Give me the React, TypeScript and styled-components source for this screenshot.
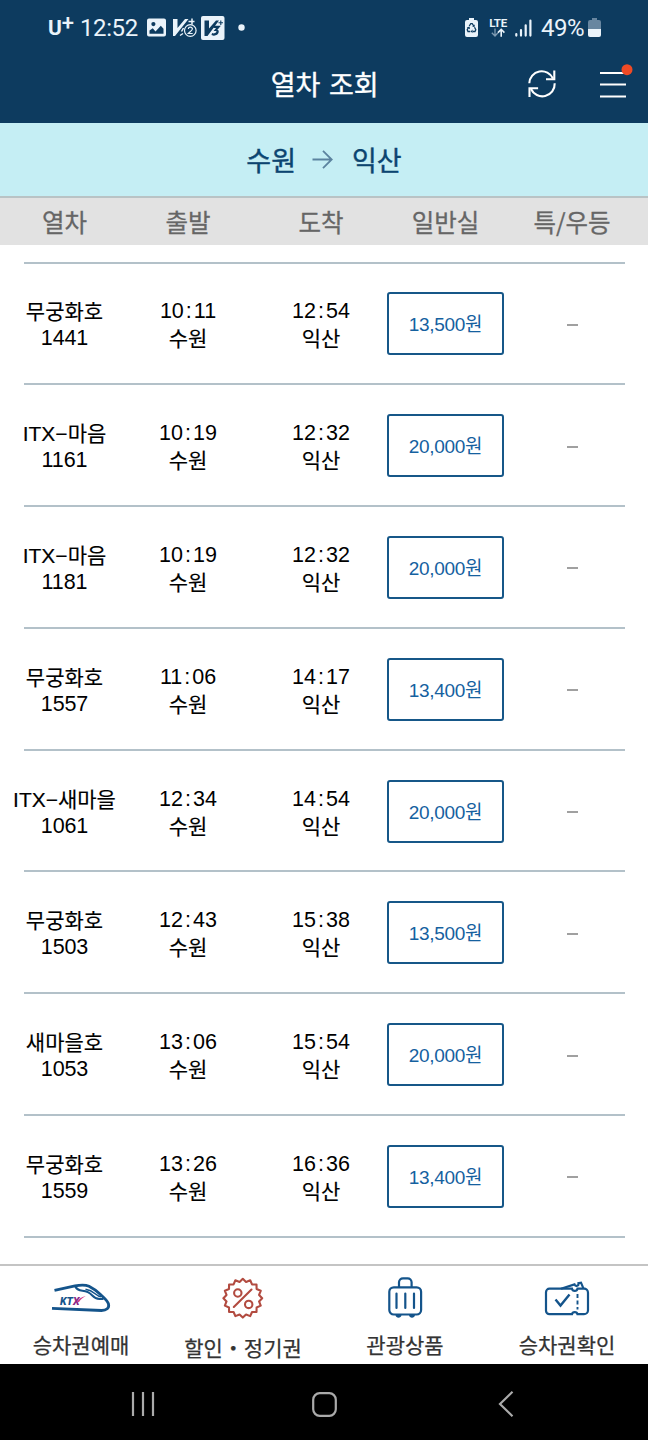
import React from "react";
import styled, { createGlobalStyle } from "styled-components";

const GlobalStyle = createGlobalStyle`
  * { box-sizing: border-box; }
  body { margin: 0; background: #fff; }
`;

const KR = `"Noto Sans CJK KR", sans-serif`;
const NUM = `"Liberation Sans", "Noto Sans CJK KR", sans-serif`;

const Screen = styled.div`
  width: 648px;
  height: 1440px;
  display: flex;
  flex-direction: column;
  background: #fff;
  font-family: ${KR};
  overflow: hidden;
`;

const StatusBar = styled.div`
  height: 56px;
  flex: none;
  display: flex;
  justify-content: space-between;
  padding: 0 47px 0 48px;
  background: #0d3b5f;
  color: #eaf3fa;
`;

const StatusGroup = styled.div`
  display: flex;
  align-items: center;
  height: 55px;
`;

const StatusText = styled.span<{ $width: number; $spacing?: number }>`
  width: ${(p) => p.$width}px;
  font: 400 24px/28px Roboto, sans-serif;
  letter-spacing: ${(p) => p.$spacing ?? 0}px;
  white-space: nowrap;
`;

const Carrier = styled.span`
  display: flex;
  width: 32px;
  font: 700 21px/30px Roboto, sans-serif;
`;

const CarrierPlus = styled.span`
  font-size: 22px;
  line-height: 19px;
  font-weight: 500;
`;

const NetworkBox = styled.div`
  width: 20px;
  display: flex;
  flex-direction: column;
  align-items: center;
`;

const NetworkLabel = styled.span`
  font: 700 11.5px/10px Roboto, sans-serif;
  letter-spacing: -0.3px;
`;

const Glyph = styled.svg<{ $ml?: number; $mr?: number; $mb?: number }>`
  display: block;
  flex: none;
  margin: 0 ${(p) => p.$mr ?? 0}px ${(p) => p.$mb ?? 0}px ${(p) => p.$ml ?? 0}px;
`;

const AppBar = styled.header`
  height: 67px;
  flex: none;
  display: grid;
  grid-template-columns: 128px 1fr 128px;
  align-items: center;
  padding-bottom: 11px;
  background: #0d3b5f;
`;

const Title = styled.h1`
  grid-column: 2;
  margin: 0;
  padding-left: 1.5px;
  text-align: center;
  font-size: 27px;
  line-height: 40px;
  font-weight: 400;
  -webkit-text-stroke: 0.4px #fff;
  word-spacing: 2.5px;
  color: #fff;
`;

const AppActions = styled.div`
  display: flex;
  align-items: center;
  gap: 42px;
  padding-left: 7px;
`;

const RouteBar = styled.div`
  height: 73px;
  flex: none;
  display: flex;
  align-items: center;
  justify-content: center;
  background: #c5eef4;
  color: #0b4470;
  font-size: 27px;
  line-height: 40px;
  -webkit-text-stroke: 0.4px #0b4470;
`;

const TableHead = styled.div`
  height: 49px;
  flex: none;
  display: grid;
  grid-template-columns: 113px 134px 132px 117px 136px;
  align-items: center;
  padding: 0 8px;
  border-top: 2px solid #b9c3c5;
  background: #e2e2e2;
`;

const HeadCell = styled.div`
  text-align: center;
  font-size: 24.5px;
  line-height: 36px;
  color: #666;
  -webkit-text-stroke: 0.3px #666;
  white-space: nowrap;
`;

const List = styled.div`
  height: 1019px;
  flex: none;
  padding-top: 16.5px;
`;

const Rule = styled.div`
  height: 2px;
  margin: 0 23.5px;
  background: #b3c1c9;
`;

const Row = styled.div`
  height: 119.8px;
  display: grid;
  grid-template-columns: 113px 134px 132px 117px 136px;
  align-items: center;
  padding: 0 8px;
`;

const Cell = styled.div`
  display: flex;
  flex-direction: column;
  align-items: center;
  padding-top: 4px;
  color: #000;
`;

const Line = styled.span<{ $kind: "hangul" | "number" | "time" }>`
  height: 27px;
  line-height: 27px;
  white-space: nowrap;
  font-family: ${(p) => (p.$kind === "hangul" ? `"Liberation Sans", ${KR}` : NUM)};
  font-size: ${(p) => (p.$kind === "hangul" ? 21 : 21.5)}px;
  letter-spacing: ${(p) => (p.$kind === "number" ? -0.1 : 0)}px;
  -webkit-text-stroke: ${(p) => (p.$kind === "hangul" ? 0.15 : 0)}px #000;
`;

const Colon = styled.span`
  margin: 0 2px;
`;

const FareButton = styled.button`
  width: 117px;
  height: 63px;
  margin: 1px 0 0;
  padding: 2px 0 0;
  border: 2px solid #165788;
  border-radius: 3px;
  background: #fff;
  color: #15619f;
  font-family: ${NUM};
  font-size: 19px;
  line-height: 27px;
  letter-spacing: -0.3px;
`;

const NoSeat = styled.span`
  width: 11px;
  height: 2px;
  margin: 3px auto 0;
  background: #a0a0a0;
`;

const TabBar = styled.nav`
  height: 100px;
  flex: none;
  display: grid;
  grid-template-columns: repeat(4, 1fr);
  border-top: 2px solid #c4c4c4;
  background: #fff;
`;

const Tab = styled.div`
  display: flex;
  flex-direction: column;
  align-items: center;
  padding-top: 8px;
`;

const TabLabel = styled.span<{ $drop?: number }>`
  margin-top: ${(p) => 6 + (p.$drop ?? 0)}px;
  font-size: 21px;
  line-height: 32px;
  color: #333;
  -webkit-text-stroke: 0.25px #333;
  white-space: nowrap;
`;

const NavBar = styled.div`
  height: 76px;
  flex: none;
  display: flex;
  align-items: center;
  justify-content: space-between;
  padding: 4px 132px 0 130px;
  background: #000;
`;

const PictureIcon = () => (
  <Glyph width="19" height="19" viewBox="0 0 19 19">
    <path fillRule="evenodd" fill="currentColor" d="M2 .5h15a2 2 0 0 1 2 2v14a2 2 0 0 1-2 2H2a2 2 0 0 1-2-2v-14a2 2 0 0 1 2-2ZM2.5 12.5v3.2h14v-5L13.8 7.8 8.5 13.4 5.7 10.3ZM6.4 4a2.1 2.1 0 1 0 0 4.2 2.1 2.1 0 0 0 0-4.2Z" />
  </Glyph>
);

const VaccineIcon = () => (
  <Glyph $ml={6} width="25" height="22" viewBox="0 0 25 22">
    <path fill="currentColor" d="M1 2h4.500v9L13 2h3.500L3 19H1Z" />
    <path fill="none" stroke="currentColor" strokeWidth="1.5" d="M16.500 4.500h6M20 1.500v6M11.500 11l-2 3.500M11 16.500l-3 2" />
    <circle cx="18.300" cy="13.500" r="5.800" fill="#0d3b5f" stroke="currentColor" strokeWidth="1.2" />
    <path fill="none" stroke="currentColor" strokeWidth="1.2" d="M16.300 12c.2-2.500 4.200-2.300 4.100 0-.1 1.400-2.600 2.800-4.100 4.500h4.400" />
  </Glyph>
);

const VaccineBoxIcon = () => (
  <Glyph $ml={4} width="24" height="24" viewBox="0 0 24 24">
    <rect width="23.5" height="24" rx="2" fill="currentColor" />
    <path fill="#0d3b5f" d="M3.500 4.500H8v8l7-8h3L6.500 20h-3Z" />
    <path fill="none" stroke="#0d3b5f" strokeWidth="2.200" d="M12.500 10.800h5L14.800 14c3 .3 2.400 4-2 4.700l-2-.7" />
    <path fill="none" stroke="#0d3b5f" strokeWidth="1.1" d="M17.500 6.800h4.500M19.800 4.500v4.600" />
  </Glyph>
);

const RecycleBattery = () => (
  <Glyph width="13" height="19" viewBox="0 0 13 19">
    <path fill="currentColor" d="M4 0h5v2h2a2 2 0 0 1 2 2v13a2 2 0 0 1-2 2H2a2 2 0 0 1-2-2V4a2 2 0 0 1 2-2h2Z" />
    <path fill="none" stroke="#0d3b5f" strokeWidth="1.3" d="m4.2 8 1.6-2.3h1.4L8.8 8M9.5 9.3l1.3 2.5-.8 1.7H7.6M5.3 13.5H3l-.8-1.7L3.6 9.3" />
    <path fill="#0d3b5f" d="m9.8 6.4-.3 2.8-2.4-1Zm-2.3 5.2v3.5l-1.9-1.7ZM1.8 9.4l2.8-.8.4 2.7Z" />
  </Glyph>
);

const DataArrows = () => (
  <Glyph width="14" height="9" viewBox="0 0 14 9">
    <path fill="none" stroke="#7f9bb2" strokeWidth="1.3" d="M4 .5v7M.8 4.8 4 8l3-3.2" />
    <path fill="none" stroke="currentColor" strokeWidth="1.6" d="M10.2 8.8v-7M7 4.6l3.2-3.3 3.2 3.3" />
  </Glyph>
);

const SignalIcon = () => (
  <Glyph $ml={7} width="17" height="18" viewBox="0 0 17 18">
    <path stroke="currentColor" strokeWidth="2.2" strokeLinecap="round" d="M1.3 15v1.6M6 11v5.6M10.7 6.3v10.3M15.4 1.5v15.1" />
  </Glyph>
);

const HalfBattery = () => (
  <Glyph $ml={4} width="13" height="19" viewBox="0 0 13 19">
    <path fill="#6886a0" d="M4 0h5v2h2a2 2 0 0 1 2 2v7H0V4a2 2 0 0 1 2-2h2Z" />
    <path fill="currentColor" d="M0 11h13v6a2 2 0 0 1-2 2H2a2 2 0 0 1-2-2Z" />
  </Glyph>
);

const RefreshIcon = () => (
  <Glyph width="30" height="30" viewBox="0 0 30 30" fill="none" stroke="#fff" strokeWidth="2.1">
    <path d="M2.300 14.200A12.400 12.400 0 0 1 26 9.500M27.700 14.300A12.400 12.400 0 0 1 4 20" />
    <path d="M27.300 1.500v8.800H19M2.500 28v-8.800h8.600" />
  </Glyph>
);

const MenuIcon = () => (
  <Glyph $mb={5} width="34" height="36" viewBox="0 0 34 36">
    <path stroke="#fff" strokeWidth="2.2" d="M1 9h26M1 20.500h26M1 32.500h26" />
    <circle cx="28" cy="5.700" r="5.500" fill="#ef4a25" />
  </Glyph>
);

const RouteArrow = () => (
  <Glyph width="56" height="20" viewBox="0 0 56 20">
    <path fill="none" stroke="#5c839f" strokeWidth="1.8" d="M16.500 9.500h19M27 .8l8.700 8.700-8.700 8.700" />
  </Glyph>
);

const KtxText = styled.text`
  font: italic 900 10.5px Roboto, sans-serif;
  letter-spacing: 0;
`;

const TrainIcon = () => (
  <Glyph width="60" height="48" viewBox="0 0 60 48" fill="none">
    <path stroke="#14548b" strokeWidth="2.800" d="M3.500 16.300 24 11.900c5-1 9.500-1.700 14 .4 4.500 2.300 8.500 5.300 11.500 8.200 3.500 3.500 7 6 8 9.500 1 4-2 6.500-7 6.500L1 34.300" />
    <path stroke="#14548b" strokeWidth="2" d="M24 12c1.500 3.500 4 4.400 7.500 4.800 4 .4 7 1.700 9.500 4.400 2.500 2.700 4 3.800 7.500 3.800h4" />
    <path stroke="#14548b" strokeWidth="1.600" d="M34.500 15.200c4.500.6 7 2.300 10 4.800 2 1.700 3.500 2.500 5.500 2.800" />
    <KtxText x="9" y="31" fill="#14548b">KT<tspan fill="#8c2a88">X</tspan></KtxText>
    <path fill="#d23b84" d="M26 28c1.500-3 4-5 8.800-6-3 1.500-4.800 3.200-6.800 6Z" />
  </Glyph>
);

const badgePath = () => {
  const points: string[] = [];
  const teeth = 16;
  for (let i = 0; i < teeth * 2; i += 1) {
    const radius = i % 2 === 0 ? 19.4 : 16.6;
    const angle = (Math.PI * i) / teeth - Math.PI / 2;
    points.push(`${21.8 + radius * Math.cos(angle)} ${24.2 + radius * Math.sin(angle)}`);
  }
  return `M${points.join("L")}Z`;
};

const DiscountIcon = () => (
  <Glyph width="44" height="48" viewBox="0 0 44 48" fill="none" stroke="#b24b40" strokeWidth="2.100">
    <path strokeLinejoin="round" d={badgePath()} />
    <path strokeLinecap="round" d="M12.800 33 30.500 15.500" />
    <circle cx="16.800" cy="19" r="3.700" />
    <circle cx="27.700" cy="30.400" r="3.700" />
  </Glyph>
);

const LuggageIcon = () => (
  <Glyph width="36" height="48" viewBox="0 0 36 48" fill="none" stroke="#14548b" strokeWidth="2.200">
    <rect x="2.300" y="13.300" width="31.800" height="27.200" rx="4.500" />
    <path d="M12 13V8.300a4 4 0 0 1 4-4h4.600a4 4 0 0 1 4 4V13" />
    <path strokeLinecap="round" d="M9.500 19.500V34M18.300 19.500V34M27 19.500V34" />
    <path fill="#14548b" stroke="none" d="M8.500 41h6c-.3 3.500-5.700 3.500-6 0Zm13.500 0h6c-.3 3.500-5.700 3.500-6 0Z" />
  </Glyph>
);

const TicketIcon = () => (
  <Glyph width="46" height="48" viewBox="0 0 46 48" fill="none" stroke="#14548b" strokeWidth="2.200">
    <path d="M5.500 14.700H28c.5 2.800 5 2.800 5.500 0H40a4 4 0 0 1 4 4V36.200a4 4 0 0 1-4 4h-6.500c-.5-2.800-5-2.800-5.500 0H5.500a3.500 3.500 0 0 1-3.500-3.500V18.200a3.500 3.500 0 0 1 3.500-3.500Z" />
    <path d="m17 14.700 13.500-4.300c1.200 2.600 4.500 1.500 4-1.300l2.500-.4 2.500 6" />
    <path strokeWidth="1.900" strokeDasharray="4 2.500" d="M33.500 20v15.500" />
    <path strokeWidth="2.400" d="m11.500 25.500 5 6 9-11" />
  </Glyph>
);

const RecentsIcon = () => (
  <Glyph width="26" height="26" viewBox="0 0 26 26">
    <path stroke="#aaa" strokeWidth="2.200" d="M3 1v24M13 1v24M23 1v24" />
  </Glyph>
);

const HomeIcon = () => (
  <Glyph $mr={5} width="25" height="25" viewBox="0 0 25 25">
    <rect x="1.200" y="1.200" width="22.600" height="22.600" rx="6.500" fill="none" stroke="#aaa" strokeWidth="2.200" />
  </Glyph>
);

const BackIcon = () => (
  <Glyph width="18" height="26" viewBox="0 0 18 26">
    <path fill="none" stroke="#aaa" strokeWidth="2.200" d="M14.500.8 2 13l12.500 12.200" />
  </Glyph>
);

const Time = ({ value }: { value: string }) => {
  const [hours, minutes] = value.split(":");
  return (
    <Line $kind="time">{hours}<Colon>:</Colon>{minutes}</Line>
  );
};

const trains = [
  { name: "무궁화호", no: "1441", dep: "10:11", arr: "12:54", fare: "13,500원" },
  { name: "ITX−마음", no: "1161", dep: "10:19", arr: "12:32", fare: "20,000원" },
  { name: "ITX−마음", no: "1181", dep: "10:19", arr: "12:32", fare: "20,000원" },
  { name: "무궁화호", no: "1557", dep: "11:06", arr: "14:17", fare: "13,400원" },
  { name: "ITX−새마을", no: "1061", dep: "12:34", arr: "14:54", fare: "20,000원" },
  { name: "무궁화호", no: "1503", dep: "12:43", arr: "15:38", fare: "13,500원" },
  { name: "새마을호", no: "1053", dep: "13:06", arr: "15:54", fare: "20,000원" },
  { name: "무궁화호", no: "1559", dep: "13:26", arr: "16:36", fare: "13,400원" },
];

export default function App() {
  return (
    <Screen>
      <GlobalStyle />
      <StatusBar>
        <StatusGroup>
          <Carrier>U<CarrierPlus>+</CarrierPlus></Carrier>
          <StatusText $width={67} $spacing={-0.4}>12:52</StatusText>
          <PictureIcon />
          <VaccineIcon />
          <VaccineBoxIcon />
          <Glyph $ml={13} width="7" height="7" viewBox="0 0 7 7"><circle cx="3.500" cy="3.500" r="3.200" fill="currentColor" /></Glyph>
        </StatusGroup>
        <StatusGroup>
          <RecycleBattery />
          <Glyph width="10" height="1" />
          <NetworkBox>
            <NetworkLabel>LTE</NetworkLabel>
            <DataArrows />
          </NetworkBox>
          <SignalIcon />
          <Glyph width="9" height="1" />
          <StatusText $width={43} $spacing={-0.5}>49%</StatusText>
          <HalfBattery />
        </StatusGroup>
      </StatusBar>
      <AppBar>
        <Title>열차 조회</Title>
        <AppActions>
          <RefreshIcon />
          <MenuIcon />
        </AppActions>
      </AppBar>
      <RouteBar>
        <span>수원</span>
        <RouteArrow />
        <span>익산</span>
      </RouteBar>
      <TableHead>
        {["열차", "출발", "도착", "일반실", "특/우등"].map((label) => (
          <HeadCell key={label}>{label}</HeadCell>
        ))}
      </TableHead>
      <List>
        <Rule />
        {trains.map((t) => (
          <React.Fragment key={t.no}>
            <Row>
              <Cell>
                <Line $kind="hangul">{t.name}</Line>
                <Line $kind="number">{t.no}</Line>
              </Cell>
              <Cell>
                <Time value={t.dep} />
                <Line $kind="hangul">수원</Line>
              </Cell>
              <Cell>
                <Time value={t.arr} />
                <Line $kind="hangul">익산</Line>
              </Cell>
              <FareButton>{t.fare}</FareButton>
              <NoSeat />
            </Row>
            <Rule />
          </React.Fragment>
        ))}
      </List>
      <TabBar>
        <Tab><TrainIcon /><TabLabel>승차권예매</TabLabel></Tab>
        <Tab><DiscountIcon /><TabLabel $drop={3}>할인・정기권</TabLabel></Tab>
        <Tab><LuggageIcon /><TabLabel>관광상품</TabLabel></Tab>
        <Tab><TicketIcon /><TabLabel>승차권확인</TabLabel></Tab>
      </TabBar>
      <NavBar>
        <RecentsIcon />
        <HomeIcon />
        <BackIcon />
      </NavBar>
    </Screen>
  );
}
